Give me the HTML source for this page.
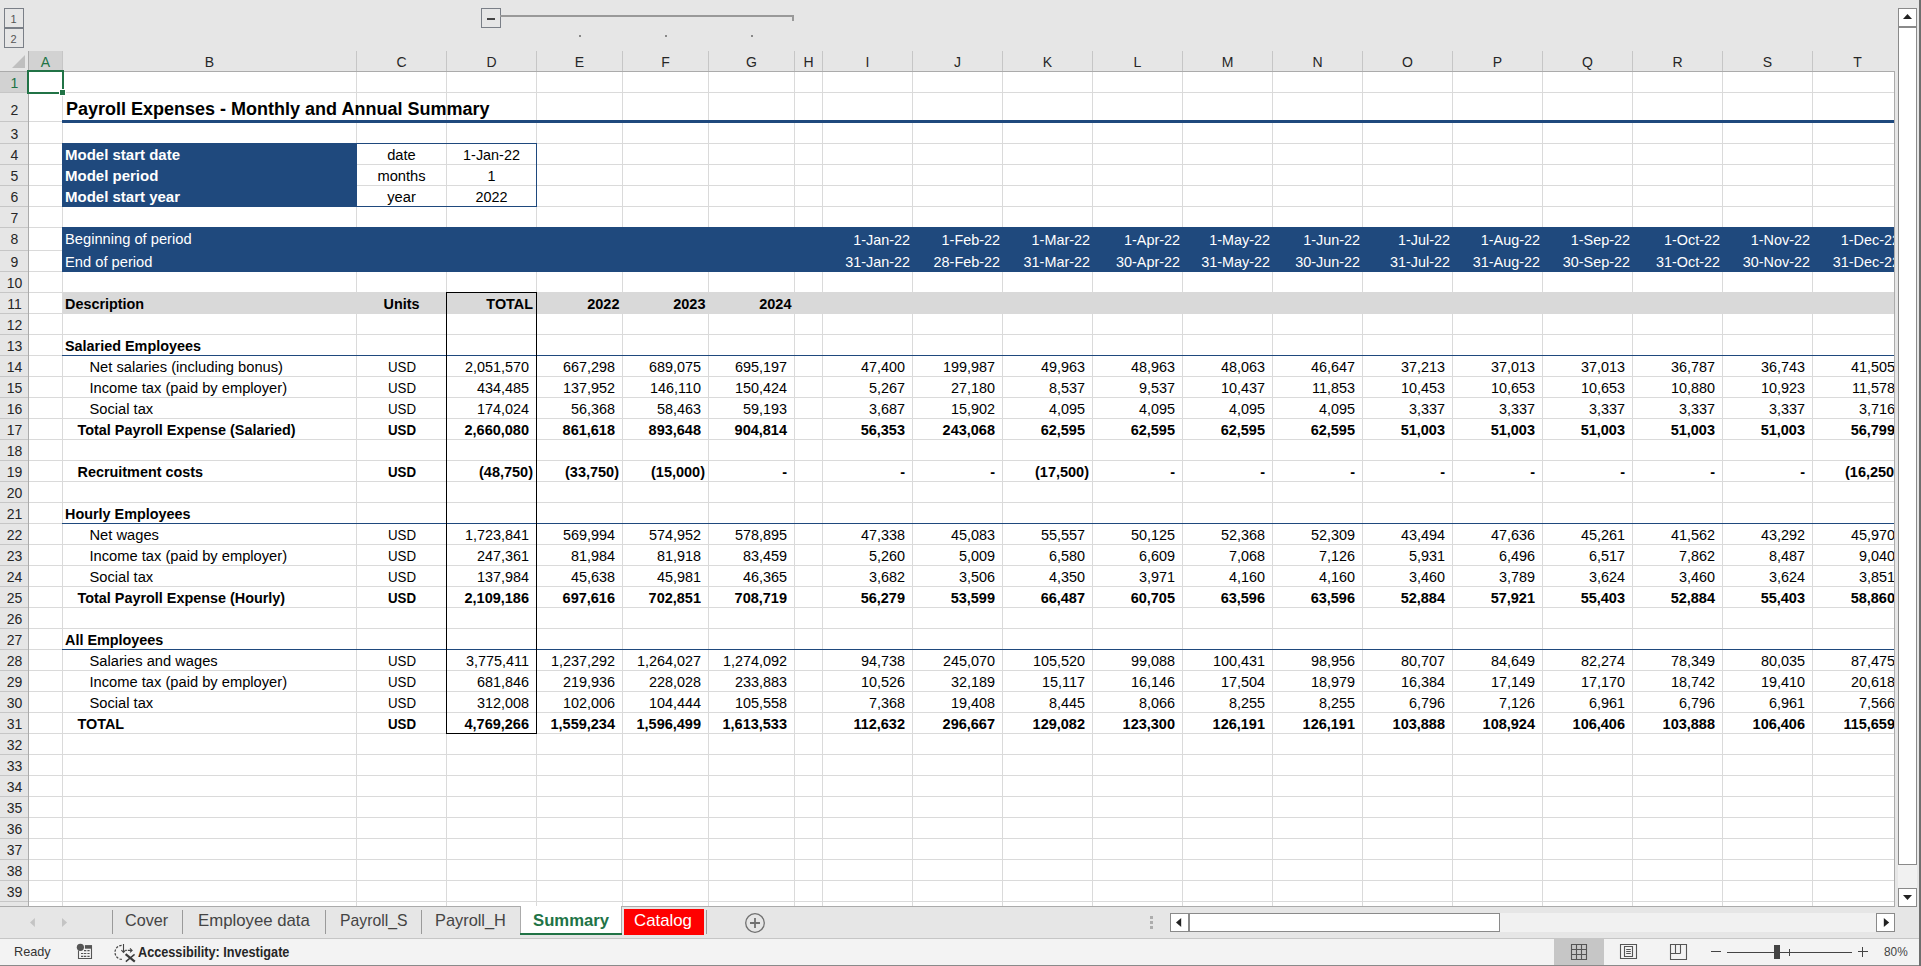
<!DOCTYPE html><html><head><meta charset="utf-8"><style>
html,body{margin:0;padding:0;width:1921px;height:966px;overflow:hidden;background:#E6E6E6;font-family:"Liberation Sans", sans-serif;}
div,span,svg{position:absolute;}
.t{white-space:nowrap;}
</style></head><body>
<div style="left:29px;top:72px;width:1865px;height:834px;background:#FFFFFF;"></div>
<div style="left:0;top:0;width:1921px;height:966px;clip-path:inset(0px 27px 60px 0px);">
<div style="left:62px;top:72px;width:1px;height:834px;background:#DADADA;"></div>
<div style="left:356px;top:72px;width:1px;height:834px;background:#DADADA;"></div>
<div style="left:446px;top:72px;width:1px;height:834px;background:#DADADA;"></div>
<div style="left:536px;top:72px;width:1px;height:834px;background:#DADADA;"></div>
<div style="left:622px;top:72px;width:1px;height:834px;background:#DADADA;"></div>
<div style="left:708px;top:72px;width:1px;height:834px;background:#DADADA;"></div>
<div style="left:794px;top:72px;width:1px;height:834px;background:#DADADA;"></div>
<div style="left:822px;top:72px;width:1px;height:834px;background:#DADADA;"></div>
<div style="left:912px;top:72px;width:1px;height:834px;background:#DADADA;"></div>
<div style="left:1002px;top:72px;width:1px;height:834px;background:#DADADA;"></div>
<div style="left:1092px;top:72px;width:1px;height:834px;background:#DADADA;"></div>
<div style="left:1182px;top:72px;width:1px;height:834px;background:#DADADA;"></div>
<div style="left:1272px;top:72px;width:1px;height:834px;background:#DADADA;"></div>
<div style="left:1362px;top:72px;width:1px;height:834px;background:#DADADA;"></div>
<div style="left:1452px;top:72px;width:1px;height:834px;background:#DADADA;"></div>
<div style="left:1542px;top:72px;width:1px;height:834px;background:#DADADA;"></div>
<div style="left:1632px;top:72px;width:1px;height:834px;background:#DADADA;"></div>
<div style="left:1722px;top:72px;width:1px;height:834px;background:#DADADA;"></div>
<div style="left:1812px;top:72px;width:1px;height:834px;background:#DADADA;"></div>
<div style="left:1902px;top:72px;width:1px;height:834px;background:#DADADA;"></div>
<div style="left:29px;top:92px;width:1865px;height:1px;background:#DADADA;"></div>
<div style="left:29px;top:121px;width:1865px;height:1px;background:#DADADA;"></div>
<div style="left:29px;top:143px;width:1865px;height:1px;background:#DADADA;"></div>
<div style="left:29px;top:164px;width:1865px;height:1px;background:#DADADA;"></div>
<div style="left:29px;top:185px;width:1865px;height:1px;background:#DADADA;"></div>
<div style="left:29px;top:206px;width:1865px;height:1px;background:#DADADA;"></div>
<div style="left:29px;top:227px;width:1865px;height:1px;background:#DADADA;"></div>
<div style="left:29px;top:250px;width:1865px;height:1px;background:#DADADA;"></div>
<div style="left:29px;top:271px;width:1865px;height:1px;background:#DADADA;"></div>
<div style="left:29px;top:292px;width:1865px;height:1px;background:#DADADA;"></div>
<div style="left:29px;top:313px;width:1865px;height:1px;background:#DADADA;"></div>
<div style="left:29px;top:334px;width:1865px;height:1px;background:#DADADA;"></div>
<div style="left:29px;top:355px;width:1865px;height:1px;background:#DADADA;"></div>
<div style="left:29px;top:376px;width:1865px;height:1px;background:#DADADA;"></div>
<div style="left:29px;top:397px;width:1865px;height:1px;background:#DADADA;"></div>
<div style="left:29px;top:418px;width:1865px;height:1px;background:#DADADA;"></div>
<div style="left:29px;top:439px;width:1865px;height:1px;background:#DADADA;"></div>
<div style="left:29px;top:460px;width:1865px;height:1px;background:#DADADA;"></div>
<div style="left:29px;top:481px;width:1865px;height:1px;background:#DADADA;"></div>
<div style="left:29px;top:502px;width:1865px;height:1px;background:#DADADA;"></div>
<div style="left:29px;top:523px;width:1865px;height:1px;background:#DADADA;"></div>
<div style="left:29px;top:544px;width:1865px;height:1px;background:#DADADA;"></div>
<div style="left:29px;top:565px;width:1865px;height:1px;background:#DADADA;"></div>
<div style="left:29px;top:586px;width:1865px;height:1px;background:#DADADA;"></div>
<div style="left:29px;top:607px;width:1865px;height:1px;background:#DADADA;"></div>
<div style="left:29px;top:628px;width:1865px;height:1px;background:#DADADA;"></div>
<div style="left:29px;top:649px;width:1865px;height:1px;background:#DADADA;"></div>
<div style="left:29px;top:670px;width:1865px;height:1px;background:#DADADA;"></div>
<div style="left:29px;top:691px;width:1865px;height:1px;background:#DADADA;"></div>
<div style="left:29px;top:712px;width:1865px;height:1px;background:#DADADA;"></div>
<div style="left:29px;top:733px;width:1865px;height:1px;background:#DADADA;"></div>
<div style="left:29px;top:754px;width:1865px;height:1px;background:#DADADA;"></div>
<div style="left:29px;top:775px;width:1865px;height:1px;background:#DADADA;"></div>
<div style="left:29px;top:796px;width:1865px;height:1px;background:#DADADA;"></div>
<div style="left:29px;top:817px;width:1865px;height:1px;background:#DADADA;"></div>
<div style="left:29px;top:838px;width:1865px;height:1px;background:#DADADA;"></div>
<div style="left:29px;top:859px;width:1865px;height:1px;background:#DADADA;"></div>
<div style="left:29px;top:880px;width:1865px;height:1px;background:#DADADA;"></div>
<div style="left:29px;top:901px;width:1865px;height:1px;background:#DADADA;"></div>
<div style="left:62px;top:143px;width:295px;height:64px;background:#1F497D;"></div>
<div style="left:62px;top:227px;width:1832px;height:45px;background:#1F497D;"></div>
<div style="left:62px;top:292px;width:1832px;height:22px;background:#D9D9D9;"></div>
<div style="left:62px;top:120px;width:1832px;height:3px;background:#1F497D;"></div>
<div style="left:356px;top:143px;width:179px;height:62px;border:1px solid #1F497D;"></div>
<div style="left:62px;top:355px;width:1832px;height:1px;background:#1F497D;"></div>
<div style="left:62px;top:523px;width:1832px;height:1px;background:#1F497D;"></div>
<div style="left:62px;top:649px;width:1832px;height:1px;background:#1F497D;"></div>
<div style="left:446px;top:292px;width:89px;height:440px;border:1px solid #000;"></div>
<span class="t" style="top:98.76px;font-size:18px;line-height:20px;font-weight:700;color:#000;left:66px;">Payroll Expenses - Monthly and Annual Summary</span>
<span class="t" style="top:144.80px;font-size:15.0px;line-height:20px;font-weight:700;color:#FFFFFF;left:65px;">Model start date</span>
<span class="t" style="top:144.90px;font-size:14.7px;line-height:20px;font-weight:400;color:#000;left:201.5px;width:400px;text-align:center;">date</span>
<span class="t" style="top:145.01px;font-size:14.4px;line-height:20px;font-weight:400;color:#000;left:291.5px;width:400px;text-align:center;">1-Jan-22</span>
<span class="t" style="top:165.80px;font-size:15.0px;line-height:20px;font-weight:700;color:#FFFFFF;left:65px;">Model period</span>
<span class="t" style="top:165.90px;font-size:14.7px;line-height:20px;font-weight:400;color:#000;left:201.5px;width:400px;text-align:center;">months</span>
<span class="t" style="top:166.01px;font-size:14.4px;line-height:20px;font-weight:400;color:#000;left:291.5px;width:400px;text-align:center;">1</span>
<span class="t" style="top:186.80px;font-size:15.0px;line-height:20px;font-weight:700;color:#FFFFFF;left:65px;">Model start year</span>
<span class="t" style="top:186.90px;font-size:14.7px;line-height:20px;font-weight:400;color:#000;left:201.5px;width:400px;text-align:center;">year</span>
<span class="t" style="top:187.01px;font-size:14.4px;line-height:20px;font-weight:400;color:#000;left:291.5px;width:400px;text-align:center;">2022</span>
<span class="t" style="top:229.40px;font-size:14.7px;line-height:20px;font-weight:400;color:#FFFFFF;left:65px;">Beginning of period</span>
<span class="t" style="top:251.90px;font-size:14.7px;line-height:20px;font-weight:400;color:#FFFFFF;left:65px;">End of period</span>
<span class="t" style="top:229.51px;font-size:14.4px;line-height:20px;font-weight:400;color:#FFFFFF;right:1011px;">1-Jan-22</span>
<span class="t" style="top:252.01px;font-size:14.4px;line-height:20px;font-weight:400;color:#FFFFFF;right:1011px;">31-Jan-22</span>
<span class="t" style="top:229.51px;font-size:14.4px;line-height:20px;font-weight:400;color:#FFFFFF;right:921px;">1-Feb-22</span>
<span class="t" style="top:252.01px;font-size:14.4px;line-height:20px;font-weight:400;color:#FFFFFF;right:921px;">28-Feb-22</span>
<span class="t" style="top:229.51px;font-size:14.4px;line-height:20px;font-weight:400;color:#FFFFFF;right:831px;">1-Mar-22</span>
<span class="t" style="top:252.01px;font-size:14.4px;line-height:20px;font-weight:400;color:#FFFFFF;right:831px;">31-Mar-22</span>
<span class="t" style="top:229.51px;font-size:14.4px;line-height:20px;font-weight:400;color:#FFFFFF;right:741px;">1-Apr-22</span>
<span class="t" style="top:252.01px;font-size:14.4px;line-height:20px;font-weight:400;color:#FFFFFF;right:741px;">30-Apr-22</span>
<span class="t" style="top:229.51px;font-size:14.4px;line-height:20px;font-weight:400;color:#FFFFFF;right:651px;">1-May-22</span>
<span class="t" style="top:252.01px;font-size:14.4px;line-height:20px;font-weight:400;color:#FFFFFF;right:651px;">31-May-22</span>
<span class="t" style="top:229.51px;font-size:14.4px;line-height:20px;font-weight:400;color:#FFFFFF;right:561px;">1-Jun-22</span>
<span class="t" style="top:252.01px;font-size:14.4px;line-height:20px;font-weight:400;color:#FFFFFF;right:561px;">30-Jun-22</span>
<span class="t" style="top:229.51px;font-size:14.4px;line-height:20px;font-weight:400;color:#FFFFFF;right:471px;">1-Jul-22</span>
<span class="t" style="top:252.01px;font-size:14.4px;line-height:20px;font-weight:400;color:#FFFFFF;right:471px;">31-Jul-22</span>
<span class="t" style="top:229.51px;font-size:14.4px;line-height:20px;font-weight:400;color:#FFFFFF;right:381px;">1-Aug-22</span>
<span class="t" style="top:252.01px;font-size:14.4px;line-height:20px;font-weight:400;color:#FFFFFF;right:381px;">31-Aug-22</span>
<span class="t" style="top:229.51px;font-size:14.4px;line-height:20px;font-weight:400;color:#FFFFFF;right:291px;">1-Sep-22</span>
<span class="t" style="top:252.01px;font-size:14.4px;line-height:20px;font-weight:400;color:#FFFFFF;right:291px;">30-Sep-22</span>
<span class="t" style="top:229.51px;font-size:14.4px;line-height:20px;font-weight:400;color:#FFFFFF;right:201px;">1-Oct-22</span>
<span class="t" style="top:252.01px;font-size:14.4px;line-height:20px;font-weight:400;color:#FFFFFF;right:201px;">31-Oct-22</span>
<span class="t" style="top:229.51px;font-size:14.4px;line-height:20px;font-weight:400;color:#FFFFFF;right:111px;">1-Nov-22</span>
<span class="t" style="top:252.01px;font-size:14.4px;line-height:20px;font-weight:400;color:#FFFFFF;right:111px;">30-Nov-22</span>
<span class="t" style="top:229.51px;font-size:14.4px;line-height:20px;font-weight:400;color:#FFFFFF;right:21px;">1-Dec-22</span>
<span class="t" style="top:252.01px;font-size:14.4px;line-height:20px;font-weight:400;color:#FFFFFF;right:21px;">31-Dec-22</span>
<span class="t" style="top:294.01px;font-size:14.4px;line-height:20px;font-weight:700;color:#000;left:65px;">Description</span>
<span class="t" style="top:294.01px;font-size:14.4px;line-height:20px;font-weight:700;color:#000;left:201.5px;width:400px;text-align:center;">Units</span>
<span class="t" style="top:294.01px;font-size:14.4px;line-height:20px;font-weight:700;color:#000;right:1388px;">TOTAL</span>
<span class="t" style="top:293.97px;font-size:14.5px;line-height:20px;font-weight:700;color:#000;right:1301.5px;">2022</span>
<span class="t" style="top:293.97px;font-size:14.5px;line-height:20px;font-weight:700;color:#000;right:1215.5px;">2023</span>
<span class="t" style="top:293.97px;font-size:14.5px;line-height:20px;font-weight:700;color:#000;right:1129.5px;">2024</span>
<span class="t" style="top:336.01px;font-size:14.4px;line-height:20px;font-weight:700;color:#000;left:65px;">Salaried Employees</span>
<span class="t" style="top:504.01px;font-size:14.4px;line-height:20px;font-weight:700;color:#000;left:65px;">Hourly Employees</span>
<span class="t" style="top:630.01px;font-size:14.4px;line-height:20px;font-weight:700;color:#000;left:65px;">All Employees</span>
<span class="t" style="top:356.90px;font-size:14.7px;line-height:20px;font-weight:400;color:#000;left:89.5px;">Net salaries (including bonus)</span>
<span class="t" style="top:357.15px;font-size:14px;line-height:20px;font-weight:400;color:#000;left:201.5px;width:400px;text-align:center;transform:scaleX(0.95);transform-origin:center center;">USD</span>
<span class="t" style="top:357.01px;font-size:14.4px;line-height:20px;font-weight:400;color:#000;right:1392px;">2,051,570</span>
<span class="t" style="top:357.01px;font-size:14.4px;line-height:20px;font-weight:400;color:#000;right:1306px;">667,298</span>
<span class="t" style="top:357.01px;font-size:14.4px;line-height:20px;font-weight:400;color:#000;right:1220px;">689,075</span>
<span class="t" style="top:357.01px;font-size:14.4px;line-height:20px;font-weight:400;color:#000;right:1134px;">695,197</span>
<span class="t" style="top:357.01px;font-size:14.4px;line-height:20px;font-weight:400;color:#000;right:1016px;">47,400</span>
<span class="t" style="top:357.01px;font-size:14.4px;line-height:20px;font-weight:400;color:#000;right:926px;">199,987</span>
<span class="t" style="top:357.01px;font-size:14.4px;line-height:20px;font-weight:400;color:#000;right:836px;">49,963</span>
<span class="t" style="top:357.01px;font-size:14.4px;line-height:20px;font-weight:400;color:#000;right:746px;">48,963</span>
<span class="t" style="top:357.01px;font-size:14.4px;line-height:20px;font-weight:400;color:#000;right:656px;">48,063</span>
<span class="t" style="top:357.01px;font-size:14.4px;line-height:20px;font-weight:400;color:#000;right:566px;">46,647</span>
<span class="t" style="top:357.01px;font-size:14.4px;line-height:20px;font-weight:400;color:#000;right:476px;">37,213</span>
<span class="t" style="top:357.01px;font-size:14.4px;line-height:20px;font-weight:400;color:#000;right:386px;">37,013</span>
<span class="t" style="top:357.01px;font-size:14.4px;line-height:20px;font-weight:400;color:#000;right:296px;">37,013</span>
<span class="t" style="top:357.01px;font-size:14.4px;line-height:20px;font-weight:400;color:#000;right:206px;">36,787</span>
<span class="t" style="top:357.01px;font-size:14.4px;line-height:20px;font-weight:400;color:#000;right:116px;">36,743</span>
<span class="t" style="top:357.01px;font-size:14.4px;line-height:20px;font-weight:400;color:#000;right:26px;">41,505</span>
<span class="t" style="top:377.90px;font-size:14.7px;line-height:20px;font-weight:400;color:#000;left:89.5px;">Income tax (paid by employer)</span>
<span class="t" style="top:378.15px;font-size:14px;line-height:20px;font-weight:400;color:#000;left:201.5px;width:400px;text-align:center;transform:scaleX(0.95);transform-origin:center center;">USD</span>
<span class="t" style="top:378.01px;font-size:14.4px;line-height:20px;font-weight:400;color:#000;right:1392px;">434,485</span>
<span class="t" style="top:378.01px;font-size:14.4px;line-height:20px;font-weight:400;color:#000;right:1306px;">137,952</span>
<span class="t" style="top:378.01px;font-size:14.4px;line-height:20px;font-weight:400;color:#000;right:1220px;">146,110</span>
<span class="t" style="top:378.01px;font-size:14.4px;line-height:20px;font-weight:400;color:#000;right:1134px;">150,424</span>
<span class="t" style="top:378.01px;font-size:14.4px;line-height:20px;font-weight:400;color:#000;right:1016px;">5,267</span>
<span class="t" style="top:378.01px;font-size:14.4px;line-height:20px;font-weight:400;color:#000;right:926px;">27,180</span>
<span class="t" style="top:378.01px;font-size:14.4px;line-height:20px;font-weight:400;color:#000;right:836px;">8,537</span>
<span class="t" style="top:378.01px;font-size:14.4px;line-height:20px;font-weight:400;color:#000;right:746px;">9,537</span>
<span class="t" style="top:378.01px;font-size:14.4px;line-height:20px;font-weight:400;color:#000;right:656px;">10,437</span>
<span class="t" style="top:378.01px;font-size:14.4px;line-height:20px;font-weight:400;color:#000;right:566px;">11,853</span>
<span class="t" style="top:378.01px;font-size:14.4px;line-height:20px;font-weight:400;color:#000;right:476px;">10,453</span>
<span class="t" style="top:378.01px;font-size:14.4px;line-height:20px;font-weight:400;color:#000;right:386px;">10,653</span>
<span class="t" style="top:378.01px;font-size:14.4px;line-height:20px;font-weight:400;color:#000;right:296px;">10,653</span>
<span class="t" style="top:378.01px;font-size:14.4px;line-height:20px;font-weight:400;color:#000;right:206px;">10,880</span>
<span class="t" style="top:378.01px;font-size:14.4px;line-height:20px;font-weight:400;color:#000;right:116px;">10,923</span>
<span class="t" style="top:378.01px;font-size:14.4px;line-height:20px;font-weight:400;color:#000;right:26px;">11,578</span>
<span class="t" style="top:398.90px;font-size:14.7px;line-height:20px;font-weight:400;color:#000;left:89.5px;">Social tax</span>
<span class="t" style="top:399.15px;font-size:14px;line-height:20px;font-weight:400;color:#000;left:201.5px;width:400px;text-align:center;transform:scaleX(0.95);transform-origin:center center;">USD</span>
<span class="t" style="top:399.01px;font-size:14.4px;line-height:20px;font-weight:400;color:#000;right:1392px;">174,024</span>
<span class="t" style="top:399.01px;font-size:14.4px;line-height:20px;font-weight:400;color:#000;right:1306px;">56,368</span>
<span class="t" style="top:399.01px;font-size:14.4px;line-height:20px;font-weight:400;color:#000;right:1220px;">58,463</span>
<span class="t" style="top:399.01px;font-size:14.4px;line-height:20px;font-weight:400;color:#000;right:1134px;">59,193</span>
<span class="t" style="top:399.01px;font-size:14.4px;line-height:20px;font-weight:400;color:#000;right:1016px;">3,687</span>
<span class="t" style="top:399.01px;font-size:14.4px;line-height:20px;font-weight:400;color:#000;right:926px;">15,902</span>
<span class="t" style="top:399.01px;font-size:14.4px;line-height:20px;font-weight:400;color:#000;right:836px;">4,095</span>
<span class="t" style="top:399.01px;font-size:14.4px;line-height:20px;font-weight:400;color:#000;right:746px;">4,095</span>
<span class="t" style="top:399.01px;font-size:14.4px;line-height:20px;font-weight:400;color:#000;right:656px;">4,095</span>
<span class="t" style="top:399.01px;font-size:14.4px;line-height:20px;font-weight:400;color:#000;right:566px;">4,095</span>
<span class="t" style="top:399.01px;font-size:14.4px;line-height:20px;font-weight:400;color:#000;right:476px;">3,337</span>
<span class="t" style="top:399.01px;font-size:14.4px;line-height:20px;font-weight:400;color:#000;right:386px;">3,337</span>
<span class="t" style="top:399.01px;font-size:14.4px;line-height:20px;font-weight:400;color:#000;right:296px;">3,337</span>
<span class="t" style="top:399.01px;font-size:14.4px;line-height:20px;font-weight:400;color:#000;right:206px;">3,337</span>
<span class="t" style="top:399.01px;font-size:14.4px;line-height:20px;font-weight:400;color:#000;right:116px;">3,337</span>
<span class="t" style="top:399.01px;font-size:14.4px;line-height:20px;font-weight:400;color:#000;right:26px;">3,716</span>
<span class="t" style="top:420.01px;font-size:14.4px;line-height:20px;font-weight:700;color:#000;left:77.5px;">Total Payroll Expense (Salaried)</span>
<span class="t" style="top:420.15px;font-size:14px;line-height:20px;font-weight:700;color:#000;left:201.5px;width:400px;text-align:center;transform:scaleX(0.95);transform-origin:center center;">USD</span>
<span class="t" style="top:419.97px;font-size:14.5px;line-height:20px;font-weight:700;color:#000;right:1392px;">2,660,080</span>
<span class="t" style="top:419.97px;font-size:14.5px;line-height:20px;font-weight:700;color:#000;right:1306px;">861,618</span>
<span class="t" style="top:419.97px;font-size:14.5px;line-height:20px;font-weight:700;color:#000;right:1220px;">893,648</span>
<span class="t" style="top:419.97px;font-size:14.5px;line-height:20px;font-weight:700;color:#000;right:1134px;">904,814</span>
<span class="t" style="top:419.97px;font-size:14.5px;line-height:20px;font-weight:700;color:#000;right:1016px;">56,353</span>
<span class="t" style="top:419.97px;font-size:14.5px;line-height:20px;font-weight:700;color:#000;right:926px;">243,068</span>
<span class="t" style="top:419.97px;font-size:14.5px;line-height:20px;font-weight:700;color:#000;right:836px;">62,595</span>
<span class="t" style="top:419.97px;font-size:14.5px;line-height:20px;font-weight:700;color:#000;right:746px;">62,595</span>
<span class="t" style="top:419.97px;font-size:14.5px;line-height:20px;font-weight:700;color:#000;right:656px;">62,595</span>
<span class="t" style="top:419.97px;font-size:14.5px;line-height:20px;font-weight:700;color:#000;right:566px;">62,595</span>
<span class="t" style="top:419.97px;font-size:14.5px;line-height:20px;font-weight:700;color:#000;right:476px;">51,003</span>
<span class="t" style="top:419.97px;font-size:14.5px;line-height:20px;font-weight:700;color:#000;right:386px;">51,003</span>
<span class="t" style="top:419.97px;font-size:14.5px;line-height:20px;font-weight:700;color:#000;right:296px;">51,003</span>
<span class="t" style="top:419.97px;font-size:14.5px;line-height:20px;font-weight:700;color:#000;right:206px;">51,003</span>
<span class="t" style="top:419.97px;font-size:14.5px;line-height:20px;font-weight:700;color:#000;right:116px;">51,003</span>
<span class="t" style="top:419.97px;font-size:14.5px;line-height:20px;font-weight:700;color:#000;right:26px;">56,799</span>
<span class="t" style="top:462.01px;font-size:14.4px;line-height:20px;font-weight:700;color:#000;left:77.5px;">Recruitment costs</span>
<span class="t" style="top:462.15px;font-size:14px;line-height:20px;font-weight:700;color:#000;left:201.5px;width:400px;text-align:center;transform:scaleX(0.95);transform-origin:center center;">USD</span>
<span class="t" style="top:461.97px;font-size:14.5px;line-height:20px;font-weight:700;color:#000;right:1388px;">(48,750)</span>
<span class="t" style="top:461.97px;font-size:14.5px;line-height:20px;font-weight:700;color:#000;right:1302px;">(33,750)</span>
<span class="t" style="top:461.97px;font-size:14.5px;line-height:20px;font-weight:700;color:#000;right:1216px;">(15,000)</span>
<span class="t" style="top:461.97px;font-size:14.5px;line-height:20px;font-weight:700;color:#000;right:1134px;">-</span>
<span class="t" style="top:461.97px;font-size:14.5px;line-height:20px;font-weight:700;color:#000;right:1016px;">-</span>
<span class="t" style="top:461.97px;font-size:14.5px;line-height:20px;font-weight:700;color:#000;right:926px;">-</span>
<span class="t" style="top:461.97px;font-size:14.5px;line-height:20px;font-weight:700;color:#000;right:832px;">(17,500)</span>
<span class="t" style="top:461.97px;font-size:14.5px;line-height:20px;font-weight:700;color:#000;right:746px;">-</span>
<span class="t" style="top:461.97px;font-size:14.5px;line-height:20px;font-weight:700;color:#000;right:656px;">-</span>
<span class="t" style="top:461.97px;font-size:14.5px;line-height:20px;font-weight:700;color:#000;right:566px;">-</span>
<span class="t" style="top:461.97px;font-size:14.5px;line-height:20px;font-weight:700;color:#000;right:476px;">-</span>
<span class="t" style="top:461.97px;font-size:14.5px;line-height:20px;font-weight:700;color:#000;right:386px;">-</span>
<span class="t" style="top:461.97px;font-size:14.5px;line-height:20px;font-weight:700;color:#000;right:296px;">-</span>
<span class="t" style="top:461.97px;font-size:14.5px;line-height:20px;font-weight:700;color:#000;right:206px;">-</span>
<span class="t" style="top:461.97px;font-size:14.5px;line-height:20px;font-weight:700;color:#000;right:116px;">-</span>
<span class="t" style="top:461.97px;font-size:14.5px;line-height:20px;font-weight:700;color:#000;right:22px;">(16,250)</span>
<span class="t" style="top:524.90px;font-size:14.7px;line-height:20px;font-weight:400;color:#000;left:89.5px;">Net wages</span>
<span class="t" style="top:525.15px;font-size:14px;line-height:20px;font-weight:400;color:#000;left:201.5px;width:400px;text-align:center;transform:scaleX(0.95);transform-origin:center center;">USD</span>
<span class="t" style="top:525.01px;font-size:14.4px;line-height:20px;font-weight:400;color:#000;right:1392px;">1,723,841</span>
<span class="t" style="top:525.01px;font-size:14.4px;line-height:20px;font-weight:400;color:#000;right:1306px;">569,994</span>
<span class="t" style="top:525.01px;font-size:14.4px;line-height:20px;font-weight:400;color:#000;right:1220px;">574,952</span>
<span class="t" style="top:525.01px;font-size:14.4px;line-height:20px;font-weight:400;color:#000;right:1134px;">578,895</span>
<span class="t" style="top:525.01px;font-size:14.4px;line-height:20px;font-weight:400;color:#000;right:1016px;">47,338</span>
<span class="t" style="top:525.01px;font-size:14.4px;line-height:20px;font-weight:400;color:#000;right:926px;">45,083</span>
<span class="t" style="top:525.01px;font-size:14.4px;line-height:20px;font-weight:400;color:#000;right:836px;">55,557</span>
<span class="t" style="top:525.01px;font-size:14.4px;line-height:20px;font-weight:400;color:#000;right:746px;">50,125</span>
<span class="t" style="top:525.01px;font-size:14.4px;line-height:20px;font-weight:400;color:#000;right:656px;">52,368</span>
<span class="t" style="top:525.01px;font-size:14.4px;line-height:20px;font-weight:400;color:#000;right:566px;">52,309</span>
<span class="t" style="top:525.01px;font-size:14.4px;line-height:20px;font-weight:400;color:#000;right:476px;">43,494</span>
<span class="t" style="top:525.01px;font-size:14.4px;line-height:20px;font-weight:400;color:#000;right:386px;">47,636</span>
<span class="t" style="top:525.01px;font-size:14.4px;line-height:20px;font-weight:400;color:#000;right:296px;">45,261</span>
<span class="t" style="top:525.01px;font-size:14.4px;line-height:20px;font-weight:400;color:#000;right:206px;">41,562</span>
<span class="t" style="top:525.01px;font-size:14.4px;line-height:20px;font-weight:400;color:#000;right:116px;">43,292</span>
<span class="t" style="top:525.01px;font-size:14.4px;line-height:20px;font-weight:400;color:#000;right:26px;">45,970</span>
<span class="t" style="top:545.90px;font-size:14.7px;line-height:20px;font-weight:400;color:#000;left:89.5px;">Income tax (paid by employer)</span>
<span class="t" style="top:546.15px;font-size:14px;line-height:20px;font-weight:400;color:#000;left:201.5px;width:400px;text-align:center;transform:scaleX(0.95);transform-origin:center center;">USD</span>
<span class="t" style="top:546.01px;font-size:14.4px;line-height:20px;font-weight:400;color:#000;right:1392px;">247,361</span>
<span class="t" style="top:546.01px;font-size:14.4px;line-height:20px;font-weight:400;color:#000;right:1306px;">81,984</span>
<span class="t" style="top:546.01px;font-size:14.4px;line-height:20px;font-weight:400;color:#000;right:1220px;">81,918</span>
<span class="t" style="top:546.01px;font-size:14.4px;line-height:20px;font-weight:400;color:#000;right:1134px;">83,459</span>
<span class="t" style="top:546.01px;font-size:14.4px;line-height:20px;font-weight:400;color:#000;right:1016px;">5,260</span>
<span class="t" style="top:546.01px;font-size:14.4px;line-height:20px;font-weight:400;color:#000;right:926px;">5,009</span>
<span class="t" style="top:546.01px;font-size:14.4px;line-height:20px;font-weight:400;color:#000;right:836px;">6,580</span>
<span class="t" style="top:546.01px;font-size:14.4px;line-height:20px;font-weight:400;color:#000;right:746px;">6,609</span>
<span class="t" style="top:546.01px;font-size:14.4px;line-height:20px;font-weight:400;color:#000;right:656px;">7,068</span>
<span class="t" style="top:546.01px;font-size:14.4px;line-height:20px;font-weight:400;color:#000;right:566px;">7,126</span>
<span class="t" style="top:546.01px;font-size:14.4px;line-height:20px;font-weight:400;color:#000;right:476px;">5,931</span>
<span class="t" style="top:546.01px;font-size:14.4px;line-height:20px;font-weight:400;color:#000;right:386px;">6,496</span>
<span class="t" style="top:546.01px;font-size:14.4px;line-height:20px;font-weight:400;color:#000;right:296px;">6,517</span>
<span class="t" style="top:546.01px;font-size:14.4px;line-height:20px;font-weight:400;color:#000;right:206px;">7,862</span>
<span class="t" style="top:546.01px;font-size:14.4px;line-height:20px;font-weight:400;color:#000;right:116px;">8,487</span>
<span class="t" style="top:546.01px;font-size:14.4px;line-height:20px;font-weight:400;color:#000;right:26px;">9,040</span>
<span class="t" style="top:566.90px;font-size:14.7px;line-height:20px;font-weight:400;color:#000;left:89.5px;">Social tax</span>
<span class="t" style="top:567.15px;font-size:14px;line-height:20px;font-weight:400;color:#000;left:201.5px;width:400px;text-align:center;transform:scaleX(0.95);transform-origin:center center;">USD</span>
<span class="t" style="top:567.01px;font-size:14.4px;line-height:20px;font-weight:400;color:#000;right:1392px;">137,984</span>
<span class="t" style="top:567.01px;font-size:14.4px;line-height:20px;font-weight:400;color:#000;right:1306px;">45,638</span>
<span class="t" style="top:567.01px;font-size:14.4px;line-height:20px;font-weight:400;color:#000;right:1220px;">45,981</span>
<span class="t" style="top:567.01px;font-size:14.4px;line-height:20px;font-weight:400;color:#000;right:1134px;">46,365</span>
<span class="t" style="top:567.01px;font-size:14.4px;line-height:20px;font-weight:400;color:#000;right:1016px;">3,682</span>
<span class="t" style="top:567.01px;font-size:14.4px;line-height:20px;font-weight:400;color:#000;right:926px;">3,506</span>
<span class="t" style="top:567.01px;font-size:14.4px;line-height:20px;font-weight:400;color:#000;right:836px;">4,350</span>
<span class="t" style="top:567.01px;font-size:14.4px;line-height:20px;font-weight:400;color:#000;right:746px;">3,971</span>
<span class="t" style="top:567.01px;font-size:14.4px;line-height:20px;font-weight:400;color:#000;right:656px;">4,160</span>
<span class="t" style="top:567.01px;font-size:14.4px;line-height:20px;font-weight:400;color:#000;right:566px;">4,160</span>
<span class="t" style="top:567.01px;font-size:14.4px;line-height:20px;font-weight:400;color:#000;right:476px;">3,460</span>
<span class="t" style="top:567.01px;font-size:14.4px;line-height:20px;font-weight:400;color:#000;right:386px;">3,789</span>
<span class="t" style="top:567.01px;font-size:14.4px;line-height:20px;font-weight:400;color:#000;right:296px;">3,624</span>
<span class="t" style="top:567.01px;font-size:14.4px;line-height:20px;font-weight:400;color:#000;right:206px;">3,460</span>
<span class="t" style="top:567.01px;font-size:14.4px;line-height:20px;font-weight:400;color:#000;right:116px;">3,624</span>
<span class="t" style="top:567.01px;font-size:14.4px;line-height:20px;font-weight:400;color:#000;right:26px;">3,851</span>
<span class="t" style="top:588.01px;font-size:14.4px;line-height:20px;font-weight:700;color:#000;left:77.5px;">Total Payroll Expense (Hourly)</span>
<span class="t" style="top:588.15px;font-size:14px;line-height:20px;font-weight:700;color:#000;left:201.5px;width:400px;text-align:center;transform:scaleX(0.95);transform-origin:center center;">USD</span>
<span class="t" style="top:587.97px;font-size:14.5px;line-height:20px;font-weight:700;color:#000;right:1392px;">2,109,186</span>
<span class="t" style="top:587.97px;font-size:14.5px;line-height:20px;font-weight:700;color:#000;right:1306px;">697,616</span>
<span class="t" style="top:587.97px;font-size:14.5px;line-height:20px;font-weight:700;color:#000;right:1220px;">702,851</span>
<span class="t" style="top:587.97px;font-size:14.5px;line-height:20px;font-weight:700;color:#000;right:1134px;">708,719</span>
<span class="t" style="top:587.97px;font-size:14.5px;line-height:20px;font-weight:700;color:#000;right:1016px;">56,279</span>
<span class="t" style="top:587.97px;font-size:14.5px;line-height:20px;font-weight:700;color:#000;right:926px;">53,599</span>
<span class="t" style="top:587.97px;font-size:14.5px;line-height:20px;font-weight:700;color:#000;right:836px;">66,487</span>
<span class="t" style="top:587.97px;font-size:14.5px;line-height:20px;font-weight:700;color:#000;right:746px;">60,705</span>
<span class="t" style="top:587.97px;font-size:14.5px;line-height:20px;font-weight:700;color:#000;right:656px;">63,596</span>
<span class="t" style="top:587.97px;font-size:14.5px;line-height:20px;font-weight:700;color:#000;right:566px;">63,596</span>
<span class="t" style="top:587.97px;font-size:14.5px;line-height:20px;font-weight:700;color:#000;right:476px;">52,884</span>
<span class="t" style="top:587.97px;font-size:14.5px;line-height:20px;font-weight:700;color:#000;right:386px;">57,921</span>
<span class="t" style="top:587.97px;font-size:14.5px;line-height:20px;font-weight:700;color:#000;right:296px;">55,403</span>
<span class="t" style="top:587.97px;font-size:14.5px;line-height:20px;font-weight:700;color:#000;right:206px;">52,884</span>
<span class="t" style="top:587.97px;font-size:14.5px;line-height:20px;font-weight:700;color:#000;right:116px;">55,403</span>
<span class="t" style="top:587.97px;font-size:14.5px;line-height:20px;font-weight:700;color:#000;right:26px;">58,860</span>
<span class="t" style="top:650.90px;font-size:14.7px;line-height:20px;font-weight:400;color:#000;left:89.5px;">Salaries and wages</span>
<span class="t" style="top:651.15px;font-size:14px;line-height:20px;font-weight:400;color:#000;left:201.5px;width:400px;text-align:center;transform:scaleX(0.95);transform-origin:center center;">USD</span>
<span class="t" style="top:651.01px;font-size:14.4px;line-height:20px;font-weight:400;color:#000;right:1392px;">3,775,411</span>
<span class="t" style="top:651.01px;font-size:14.4px;line-height:20px;font-weight:400;color:#000;right:1306px;">1,237,292</span>
<span class="t" style="top:651.01px;font-size:14.4px;line-height:20px;font-weight:400;color:#000;right:1220px;">1,264,027</span>
<span class="t" style="top:651.01px;font-size:14.4px;line-height:20px;font-weight:400;color:#000;right:1134px;">1,274,092</span>
<span class="t" style="top:651.01px;font-size:14.4px;line-height:20px;font-weight:400;color:#000;right:1016px;">94,738</span>
<span class="t" style="top:651.01px;font-size:14.4px;line-height:20px;font-weight:400;color:#000;right:926px;">245,070</span>
<span class="t" style="top:651.01px;font-size:14.4px;line-height:20px;font-weight:400;color:#000;right:836px;">105,520</span>
<span class="t" style="top:651.01px;font-size:14.4px;line-height:20px;font-weight:400;color:#000;right:746px;">99,088</span>
<span class="t" style="top:651.01px;font-size:14.4px;line-height:20px;font-weight:400;color:#000;right:656px;">100,431</span>
<span class="t" style="top:651.01px;font-size:14.4px;line-height:20px;font-weight:400;color:#000;right:566px;">98,956</span>
<span class="t" style="top:651.01px;font-size:14.4px;line-height:20px;font-weight:400;color:#000;right:476px;">80,707</span>
<span class="t" style="top:651.01px;font-size:14.4px;line-height:20px;font-weight:400;color:#000;right:386px;">84,649</span>
<span class="t" style="top:651.01px;font-size:14.4px;line-height:20px;font-weight:400;color:#000;right:296px;">82,274</span>
<span class="t" style="top:651.01px;font-size:14.4px;line-height:20px;font-weight:400;color:#000;right:206px;">78,349</span>
<span class="t" style="top:651.01px;font-size:14.4px;line-height:20px;font-weight:400;color:#000;right:116px;">80,035</span>
<span class="t" style="top:651.01px;font-size:14.4px;line-height:20px;font-weight:400;color:#000;right:26px;">87,475</span>
<span class="t" style="top:671.90px;font-size:14.7px;line-height:20px;font-weight:400;color:#000;left:89.5px;">Income tax (paid by employer)</span>
<span class="t" style="top:672.15px;font-size:14px;line-height:20px;font-weight:400;color:#000;left:201.5px;width:400px;text-align:center;transform:scaleX(0.95);transform-origin:center center;">USD</span>
<span class="t" style="top:672.01px;font-size:14.4px;line-height:20px;font-weight:400;color:#000;right:1392px;">681,846</span>
<span class="t" style="top:672.01px;font-size:14.4px;line-height:20px;font-weight:400;color:#000;right:1306px;">219,936</span>
<span class="t" style="top:672.01px;font-size:14.4px;line-height:20px;font-weight:400;color:#000;right:1220px;">228,028</span>
<span class="t" style="top:672.01px;font-size:14.4px;line-height:20px;font-weight:400;color:#000;right:1134px;">233,883</span>
<span class="t" style="top:672.01px;font-size:14.4px;line-height:20px;font-weight:400;color:#000;right:1016px;">10,526</span>
<span class="t" style="top:672.01px;font-size:14.4px;line-height:20px;font-weight:400;color:#000;right:926px;">32,189</span>
<span class="t" style="top:672.01px;font-size:14.4px;line-height:20px;font-weight:400;color:#000;right:836px;">15,117</span>
<span class="t" style="top:672.01px;font-size:14.4px;line-height:20px;font-weight:400;color:#000;right:746px;">16,146</span>
<span class="t" style="top:672.01px;font-size:14.4px;line-height:20px;font-weight:400;color:#000;right:656px;">17,504</span>
<span class="t" style="top:672.01px;font-size:14.4px;line-height:20px;font-weight:400;color:#000;right:566px;">18,979</span>
<span class="t" style="top:672.01px;font-size:14.4px;line-height:20px;font-weight:400;color:#000;right:476px;">16,384</span>
<span class="t" style="top:672.01px;font-size:14.4px;line-height:20px;font-weight:400;color:#000;right:386px;">17,149</span>
<span class="t" style="top:672.01px;font-size:14.4px;line-height:20px;font-weight:400;color:#000;right:296px;">17,170</span>
<span class="t" style="top:672.01px;font-size:14.4px;line-height:20px;font-weight:400;color:#000;right:206px;">18,742</span>
<span class="t" style="top:672.01px;font-size:14.4px;line-height:20px;font-weight:400;color:#000;right:116px;">19,410</span>
<span class="t" style="top:672.01px;font-size:14.4px;line-height:20px;font-weight:400;color:#000;right:26px;">20,618</span>
<span class="t" style="top:692.90px;font-size:14.7px;line-height:20px;font-weight:400;color:#000;left:89.5px;">Social tax</span>
<span class="t" style="top:693.15px;font-size:14px;line-height:20px;font-weight:400;color:#000;left:201.5px;width:400px;text-align:center;transform:scaleX(0.95);transform-origin:center center;">USD</span>
<span class="t" style="top:693.01px;font-size:14.4px;line-height:20px;font-weight:400;color:#000;right:1392px;">312,008</span>
<span class="t" style="top:693.01px;font-size:14.4px;line-height:20px;font-weight:400;color:#000;right:1306px;">102,006</span>
<span class="t" style="top:693.01px;font-size:14.4px;line-height:20px;font-weight:400;color:#000;right:1220px;">104,444</span>
<span class="t" style="top:693.01px;font-size:14.4px;line-height:20px;font-weight:400;color:#000;right:1134px;">105,558</span>
<span class="t" style="top:693.01px;font-size:14.4px;line-height:20px;font-weight:400;color:#000;right:1016px;">7,368</span>
<span class="t" style="top:693.01px;font-size:14.4px;line-height:20px;font-weight:400;color:#000;right:926px;">19,408</span>
<span class="t" style="top:693.01px;font-size:14.4px;line-height:20px;font-weight:400;color:#000;right:836px;">8,445</span>
<span class="t" style="top:693.01px;font-size:14.4px;line-height:20px;font-weight:400;color:#000;right:746px;">8,066</span>
<span class="t" style="top:693.01px;font-size:14.4px;line-height:20px;font-weight:400;color:#000;right:656px;">8,255</span>
<span class="t" style="top:693.01px;font-size:14.4px;line-height:20px;font-weight:400;color:#000;right:566px;">8,255</span>
<span class="t" style="top:693.01px;font-size:14.4px;line-height:20px;font-weight:400;color:#000;right:476px;">6,796</span>
<span class="t" style="top:693.01px;font-size:14.4px;line-height:20px;font-weight:400;color:#000;right:386px;">7,126</span>
<span class="t" style="top:693.01px;font-size:14.4px;line-height:20px;font-weight:400;color:#000;right:296px;">6,961</span>
<span class="t" style="top:693.01px;font-size:14.4px;line-height:20px;font-weight:400;color:#000;right:206px;">6,796</span>
<span class="t" style="top:693.01px;font-size:14.4px;line-height:20px;font-weight:400;color:#000;right:116px;">6,961</span>
<span class="t" style="top:693.01px;font-size:14.4px;line-height:20px;font-weight:400;color:#000;right:26px;">7,566</span>
<span class="t" style="top:714.01px;font-size:14.4px;line-height:20px;font-weight:700;color:#000;left:77.5px;">TOTAL</span>
<span class="t" style="top:714.15px;font-size:14px;line-height:20px;font-weight:700;color:#000;left:201.5px;width:400px;text-align:center;transform:scaleX(0.95);transform-origin:center center;">USD</span>
<span class="t" style="top:713.97px;font-size:14.5px;line-height:20px;font-weight:700;color:#000;right:1392px;">4,769,266</span>
<span class="t" style="top:713.97px;font-size:14.5px;line-height:20px;font-weight:700;color:#000;right:1306px;">1,559,234</span>
<span class="t" style="top:713.97px;font-size:14.5px;line-height:20px;font-weight:700;color:#000;right:1220px;">1,596,499</span>
<span class="t" style="top:713.97px;font-size:14.5px;line-height:20px;font-weight:700;color:#000;right:1134px;">1,613,533</span>
<span class="t" style="top:713.97px;font-size:14.5px;line-height:20px;font-weight:700;color:#000;right:1016px;">112,632</span>
<span class="t" style="top:713.97px;font-size:14.5px;line-height:20px;font-weight:700;color:#000;right:926px;">296,667</span>
<span class="t" style="top:713.97px;font-size:14.5px;line-height:20px;font-weight:700;color:#000;right:836px;">129,082</span>
<span class="t" style="top:713.97px;font-size:14.5px;line-height:20px;font-weight:700;color:#000;right:746px;">123,300</span>
<span class="t" style="top:713.97px;font-size:14.5px;line-height:20px;font-weight:700;color:#000;right:656px;">126,191</span>
<span class="t" style="top:713.97px;font-size:14.5px;line-height:20px;font-weight:700;color:#000;right:566px;">126,191</span>
<span class="t" style="top:713.97px;font-size:14.5px;line-height:20px;font-weight:700;color:#000;right:476px;">103,888</span>
<span class="t" style="top:713.97px;font-size:14.5px;line-height:20px;font-weight:700;color:#000;right:386px;">108,924</span>
<span class="t" style="top:713.97px;font-size:14.5px;line-height:20px;font-weight:700;color:#000;right:296px;">106,406</span>
<span class="t" style="top:713.97px;font-size:14.5px;line-height:20px;font-weight:700;color:#000;right:206px;">103,888</span>
<span class="t" style="top:713.97px;font-size:14.5px;line-height:20px;font-weight:700;color:#000;right:116px;">106,406</span>
<span class="t" style="top:713.97px;font-size:14.5px;line-height:20px;font-weight:700;color:#000;right:26px;">115,659</span>
</div>
<div style="left:28px;top:51px;width:1866px;height:20px;background:#E6E6E6;"></div>
<div style="left:28px;top:51px;width:34px;height:20px;background:#D2D2D2;"></div>
<div style="left:62px;top:51px;width:1px;height:20px;background:#C6C6C6;"></div>
<div style="left:356px;top:51px;width:1px;height:20px;background:#C6C6C6;"></div>
<div style="left:446px;top:51px;width:1px;height:20px;background:#C6C6C6;"></div>
<div style="left:536px;top:51px;width:1px;height:20px;background:#C6C6C6;"></div>
<div style="left:622px;top:51px;width:1px;height:20px;background:#C6C6C6;"></div>
<div style="left:708px;top:51px;width:1px;height:20px;background:#C6C6C6;"></div>
<div style="left:794px;top:51px;width:1px;height:20px;background:#C6C6C6;"></div>
<div style="left:822px;top:51px;width:1px;height:20px;background:#C6C6C6;"></div>
<div style="left:912px;top:51px;width:1px;height:20px;background:#C6C6C6;"></div>
<div style="left:1002px;top:51px;width:1px;height:20px;background:#C6C6C6;"></div>
<div style="left:1092px;top:51px;width:1px;height:20px;background:#C6C6C6;"></div>
<div style="left:1182px;top:51px;width:1px;height:20px;background:#C6C6C6;"></div>
<div style="left:1272px;top:51px;width:1px;height:20px;background:#C6C6C6;"></div>
<div style="left:1362px;top:51px;width:1px;height:20px;background:#C6C6C6;"></div>
<div style="left:1452px;top:51px;width:1px;height:20px;background:#C6C6C6;"></div>
<div style="left:1542px;top:51px;width:1px;height:20px;background:#C6C6C6;"></div>
<div style="left:1632px;top:51px;width:1px;height:20px;background:#C6C6C6;"></div>
<div style="left:1722px;top:51px;width:1px;height:20px;background:#C6C6C6;"></div>
<div style="left:1812px;top:51px;width:1px;height:20px;background:#C6C6C6;"></div>
<div style="left:0px;top:71px;width:1894px;height:1px;background:#ABABAB;"></div>
<span class="t" style="top:52.15px;font-size:14px;line-height:20px;font-weight:400;color:#217346;left:-154.5px;width:400px;text-align:center;">A</span>
<span class="t" style="top:52.15px;font-size:14px;line-height:20px;font-weight:400;color:#262626;left:9.5px;width:400px;text-align:center;">B</span>
<span class="t" style="top:52.15px;font-size:14px;line-height:20px;font-weight:400;color:#262626;left:201.5px;width:400px;text-align:center;">C</span>
<span class="t" style="top:52.15px;font-size:14px;line-height:20px;font-weight:400;color:#262626;left:291.5px;width:400px;text-align:center;">D</span>
<span class="t" style="top:52.15px;font-size:14px;line-height:20px;font-weight:400;color:#262626;left:379.5px;width:400px;text-align:center;">E</span>
<span class="t" style="top:52.15px;font-size:14px;line-height:20px;font-weight:400;color:#262626;left:465.5px;width:400px;text-align:center;">F</span>
<span class="t" style="top:52.15px;font-size:14px;line-height:20px;font-weight:400;color:#262626;left:551.5px;width:400px;text-align:center;">G</span>
<span class="t" style="top:52.15px;font-size:14px;line-height:20px;font-weight:400;color:#262626;left:608.5px;width:400px;text-align:center;">H</span>
<span class="t" style="top:52.15px;font-size:14px;line-height:20px;font-weight:400;color:#262626;left:667.5px;width:400px;text-align:center;">I</span>
<span class="t" style="top:52.15px;font-size:14px;line-height:20px;font-weight:400;color:#262626;left:757.5px;width:400px;text-align:center;">J</span>
<span class="t" style="top:52.15px;font-size:14px;line-height:20px;font-weight:400;color:#262626;left:847.5px;width:400px;text-align:center;">K</span>
<span class="t" style="top:52.15px;font-size:14px;line-height:20px;font-weight:400;color:#262626;left:937.5px;width:400px;text-align:center;">L</span>
<span class="t" style="top:52.15px;font-size:14px;line-height:20px;font-weight:400;color:#262626;left:1027.5px;width:400px;text-align:center;">M</span>
<span class="t" style="top:52.15px;font-size:14px;line-height:20px;font-weight:400;color:#262626;left:1117.5px;width:400px;text-align:center;">N</span>
<span class="t" style="top:52.15px;font-size:14px;line-height:20px;font-weight:400;color:#262626;left:1207.5px;width:400px;text-align:center;">O</span>
<span class="t" style="top:52.15px;font-size:14px;line-height:20px;font-weight:400;color:#262626;left:1297.5px;width:400px;text-align:center;">P</span>
<span class="t" style="top:52.15px;font-size:14px;line-height:20px;font-weight:400;color:#262626;left:1387.5px;width:400px;text-align:center;">Q</span>
<span class="t" style="top:52.15px;font-size:14px;line-height:20px;font-weight:400;color:#262626;left:1477.5px;width:400px;text-align:center;">R</span>
<span class="t" style="top:52.15px;font-size:14px;line-height:20px;font-weight:400;color:#262626;left:1567.5px;width:400px;text-align:center;">S</span>
<span class="t" style="top:52.15px;font-size:14px;line-height:20px;font-weight:400;color:#262626;left:1657.5px;width:400px;text-align:center;">T</span>
<div style="left:0px;top:72px;width:28px;height:834px;background:#E6E6E6;"></div>
<div style="left:0px;top:72px;width:28px;height:20px;background:#D2D2D2;"></div>
<div style="left:28px;top:51px;width:1px;height:855px;background:#ABABAB;"></div>
<div style="left:0px;top:92px;width:28px;height:1px;background:#C6C6C6;"></div>
<span class="t" style="top:73.15px;font-size:14px;line-height:20px;font-weight:400;color:#217346;left:-185.5px;width:400px;text-align:center;">1</span>
<div style="left:0px;top:121px;width:28px;height:1px;background:#C6C6C6;"></div>
<span class="t" style="top:100.15px;font-size:14px;line-height:20px;font-weight:400;color:#262626;left:-185.5px;width:400px;text-align:center;">2</span>
<div style="left:0px;top:143px;width:28px;height:1px;background:#C6C6C6;"></div>
<span class="t" style="top:124.15px;font-size:14px;line-height:20px;font-weight:400;color:#262626;left:-185.5px;width:400px;text-align:center;">3</span>
<div style="left:0px;top:164px;width:28px;height:1px;background:#C6C6C6;"></div>
<span class="t" style="top:145.15px;font-size:14px;line-height:20px;font-weight:400;color:#262626;left:-185.5px;width:400px;text-align:center;">4</span>
<div style="left:0px;top:185px;width:28px;height:1px;background:#C6C6C6;"></div>
<span class="t" style="top:166.15px;font-size:14px;line-height:20px;font-weight:400;color:#262626;left:-185.5px;width:400px;text-align:center;">5</span>
<div style="left:0px;top:206px;width:28px;height:1px;background:#C6C6C6;"></div>
<span class="t" style="top:187.15px;font-size:14px;line-height:20px;font-weight:400;color:#262626;left:-185.5px;width:400px;text-align:center;">6</span>
<div style="left:0px;top:227px;width:28px;height:1px;background:#C6C6C6;"></div>
<span class="t" style="top:208.15px;font-size:14px;line-height:20px;font-weight:400;color:#262626;left:-185.5px;width:400px;text-align:center;">7</span>
<div style="left:0px;top:250px;width:28px;height:1px;background:#C6C6C6;"></div>
<span class="t" style="top:229.15px;font-size:14px;line-height:20px;font-weight:400;color:#262626;left:-185.5px;width:400px;text-align:center;">8</span>
<div style="left:0px;top:271px;width:28px;height:1px;background:#C6C6C6;"></div>
<span class="t" style="top:252.15px;font-size:14px;line-height:20px;font-weight:400;color:#262626;left:-185.5px;width:400px;text-align:center;">9</span>
<div style="left:0px;top:292px;width:28px;height:1px;background:#C6C6C6;"></div>
<span class="t" style="top:273.15px;font-size:14px;line-height:20px;font-weight:400;color:#262626;left:-185.5px;width:400px;text-align:center;">10</span>
<div style="left:0px;top:313px;width:28px;height:1px;background:#C6C6C6;"></div>
<span class="t" style="top:294.15px;font-size:14px;line-height:20px;font-weight:400;color:#262626;left:-185.5px;width:400px;text-align:center;">11</span>
<div style="left:0px;top:334px;width:28px;height:1px;background:#C6C6C6;"></div>
<span class="t" style="top:315.15px;font-size:14px;line-height:20px;font-weight:400;color:#262626;left:-185.5px;width:400px;text-align:center;">12</span>
<div style="left:0px;top:355px;width:28px;height:1px;background:#C6C6C6;"></div>
<span class="t" style="top:336.15px;font-size:14px;line-height:20px;font-weight:400;color:#262626;left:-185.5px;width:400px;text-align:center;">13</span>
<div style="left:0px;top:376px;width:28px;height:1px;background:#C6C6C6;"></div>
<span class="t" style="top:357.15px;font-size:14px;line-height:20px;font-weight:400;color:#262626;left:-185.5px;width:400px;text-align:center;">14</span>
<div style="left:0px;top:397px;width:28px;height:1px;background:#C6C6C6;"></div>
<span class="t" style="top:378.15px;font-size:14px;line-height:20px;font-weight:400;color:#262626;left:-185.5px;width:400px;text-align:center;">15</span>
<div style="left:0px;top:418px;width:28px;height:1px;background:#C6C6C6;"></div>
<span class="t" style="top:399.15px;font-size:14px;line-height:20px;font-weight:400;color:#262626;left:-185.5px;width:400px;text-align:center;">16</span>
<div style="left:0px;top:439px;width:28px;height:1px;background:#C6C6C6;"></div>
<span class="t" style="top:420.15px;font-size:14px;line-height:20px;font-weight:400;color:#262626;left:-185.5px;width:400px;text-align:center;">17</span>
<div style="left:0px;top:460px;width:28px;height:1px;background:#C6C6C6;"></div>
<span class="t" style="top:441.15px;font-size:14px;line-height:20px;font-weight:400;color:#262626;left:-185.5px;width:400px;text-align:center;">18</span>
<div style="left:0px;top:481px;width:28px;height:1px;background:#C6C6C6;"></div>
<span class="t" style="top:462.15px;font-size:14px;line-height:20px;font-weight:400;color:#262626;left:-185.5px;width:400px;text-align:center;">19</span>
<div style="left:0px;top:502px;width:28px;height:1px;background:#C6C6C6;"></div>
<span class="t" style="top:483.15px;font-size:14px;line-height:20px;font-weight:400;color:#262626;left:-185.5px;width:400px;text-align:center;">20</span>
<div style="left:0px;top:523px;width:28px;height:1px;background:#C6C6C6;"></div>
<span class="t" style="top:504.15px;font-size:14px;line-height:20px;font-weight:400;color:#262626;left:-185.5px;width:400px;text-align:center;">21</span>
<div style="left:0px;top:544px;width:28px;height:1px;background:#C6C6C6;"></div>
<span class="t" style="top:525.15px;font-size:14px;line-height:20px;font-weight:400;color:#262626;left:-185.5px;width:400px;text-align:center;">22</span>
<div style="left:0px;top:565px;width:28px;height:1px;background:#C6C6C6;"></div>
<span class="t" style="top:546.15px;font-size:14px;line-height:20px;font-weight:400;color:#262626;left:-185.5px;width:400px;text-align:center;">23</span>
<div style="left:0px;top:586px;width:28px;height:1px;background:#C6C6C6;"></div>
<span class="t" style="top:567.15px;font-size:14px;line-height:20px;font-weight:400;color:#262626;left:-185.5px;width:400px;text-align:center;">24</span>
<div style="left:0px;top:607px;width:28px;height:1px;background:#C6C6C6;"></div>
<span class="t" style="top:588.15px;font-size:14px;line-height:20px;font-weight:400;color:#262626;left:-185.5px;width:400px;text-align:center;">25</span>
<div style="left:0px;top:628px;width:28px;height:1px;background:#C6C6C6;"></div>
<span class="t" style="top:609.15px;font-size:14px;line-height:20px;font-weight:400;color:#262626;left:-185.5px;width:400px;text-align:center;">26</span>
<div style="left:0px;top:649px;width:28px;height:1px;background:#C6C6C6;"></div>
<span class="t" style="top:630.15px;font-size:14px;line-height:20px;font-weight:400;color:#262626;left:-185.5px;width:400px;text-align:center;">27</span>
<div style="left:0px;top:670px;width:28px;height:1px;background:#C6C6C6;"></div>
<span class="t" style="top:651.15px;font-size:14px;line-height:20px;font-weight:400;color:#262626;left:-185.5px;width:400px;text-align:center;">28</span>
<div style="left:0px;top:691px;width:28px;height:1px;background:#C6C6C6;"></div>
<span class="t" style="top:672.15px;font-size:14px;line-height:20px;font-weight:400;color:#262626;left:-185.5px;width:400px;text-align:center;">29</span>
<div style="left:0px;top:712px;width:28px;height:1px;background:#C6C6C6;"></div>
<span class="t" style="top:693.15px;font-size:14px;line-height:20px;font-weight:400;color:#262626;left:-185.5px;width:400px;text-align:center;">30</span>
<div style="left:0px;top:733px;width:28px;height:1px;background:#C6C6C6;"></div>
<span class="t" style="top:714.15px;font-size:14px;line-height:20px;font-weight:400;color:#262626;left:-185.5px;width:400px;text-align:center;">31</span>
<div style="left:0px;top:754px;width:28px;height:1px;background:#C6C6C6;"></div>
<span class="t" style="top:735.15px;font-size:14px;line-height:20px;font-weight:400;color:#262626;left:-185.5px;width:400px;text-align:center;">32</span>
<div style="left:0px;top:775px;width:28px;height:1px;background:#C6C6C6;"></div>
<span class="t" style="top:756.15px;font-size:14px;line-height:20px;font-weight:400;color:#262626;left:-185.5px;width:400px;text-align:center;">33</span>
<div style="left:0px;top:796px;width:28px;height:1px;background:#C6C6C6;"></div>
<span class="t" style="top:777.15px;font-size:14px;line-height:20px;font-weight:400;color:#262626;left:-185.5px;width:400px;text-align:center;">34</span>
<div style="left:0px;top:817px;width:28px;height:1px;background:#C6C6C6;"></div>
<span class="t" style="top:798.15px;font-size:14px;line-height:20px;font-weight:400;color:#262626;left:-185.5px;width:400px;text-align:center;">35</span>
<div style="left:0px;top:838px;width:28px;height:1px;background:#C6C6C6;"></div>
<span class="t" style="top:819.15px;font-size:14px;line-height:20px;font-weight:400;color:#262626;left:-185.5px;width:400px;text-align:center;">36</span>
<div style="left:0px;top:859px;width:28px;height:1px;background:#C6C6C6;"></div>
<span class="t" style="top:840.15px;font-size:14px;line-height:20px;font-weight:400;color:#262626;left:-185.5px;width:400px;text-align:center;">37</span>
<div style="left:0px;top:880px;width:28px;height:1px;background:#C6C6C6;"></div>
<span class="t" style="top:861.15px;font-size:14px;line-height:20px;font-weight:400;color:#262626;left:-185.5px;width:400px;text-align:center;">38</span>
<div style="left:0px;top:901px;width:28px;height:1px;background:#C6C6C6;"></div>
<span class="t" style="top:882.15px;font-size:14px;line-height:20px;font-weight:400;color:#262626;left:-185.5px;width:400px;text-align:center;">39</span>
<svg style="left:0;top:51px" width="28" height="20"><polygon points="25,4 25,17 12,17" fill="#BFBFBF"/></svg>
<div style="left:4px;top:8px;width:18px;height:18px;border:1px solid #7A7F87;background:#E6E6E6;"></div>
<div style="left:4px;top:28px;width:18px;height:18px;border:1px solid #7A7F87;background:#E6E6E6;"></div>
<span class="t" style="top:9.19px;font-size:11px;line-height:20px;font-weight:400;color:#555;left:-186.5px;width:400px;text-align:center;">1</span>
<span class="t" style="top:29.19px;font-size:11px;line-height:20px;font-weight:400;color:#555;left:-186.5px;width:400px;text-align:center;">2</span>
<div style="left:481px;top:8px;width:18px;height:18px;border:1px solid #7A7F87;"></div>
<div style="left:487px;top:18px;width:8px;height:2px;background:#444;"></div>
<div style="left:500px;top:15px;width:294px;height:2px;background:#999;"></div>
<div style="left:792px;top:15px;width:2px;height:6px;background:#999;"></div>
<div style="left:579px;top:35px;width:2px;height:2px;background:#888;"></div>
<div style="left:665px;top:35px;width:2px;height:2px;background:#888;"></div>
<div style="left:751px;top:35px;width:2px;height:2px;background:#888;"></div>
<div style="left:27px;top:70px;width:33px;height:20px;border:2px solid #217346;"></div>
<div style="left:60px;top:90px;width:5px;height:5px;background:#217346;outline:1px solid #fff;"></div>
<div style="left:1894px;top:71px;width:1px;height:835px;background:#ABABAB;"></div>
<div style="left:0px;top:906px;width:1921px;height:1px;background:#ABABAB;"></div>
<div style="left:0px;top:907px;width:1921px;height:31px;background:#E6E6E6;"></div>
<svg style="left:28px;top:916px" width="12" height="14"><polygon points="6.9,1.9 6.9,10.9 2,6.4" fill="#C4C4C4"/></svg>
<svg style="left:59px;top:916px" width="12" height="14"><polygon points="3,1.9 3,10.9 8.1,6.4" fill="#C4C4C4"/></svg>
<div style="left:112px;top:910px;width:1px;height:24px;background:#9A9A9A;"></div>
<div style="left:182px;top:910px;width:1px;height:24px;background:#9A9A9A;"></div>
<div style="left:325px;top:910px;width:1px;height:24px;background:#9A9A9A;"></div>
<div style="left:421px;top:910px;width:1px;height:24px;background:#9A9A9A;"></div>
<div style="left:706px;top:910px;width:1px;height:24px;background:#9A9A9A;"></div>
<span class="t" style="top:911.11px;font-size:17px;line-height:20px;font-weight:400;color:#444;left:125.4px;transform:scaleX(0.95);transform-origin:left center;">Cover</span>
<span class="t" style="top:911.11px;font-size:17px;line-height:20px;font-weight:400;color:#444;left:198px;transform:scaleX(0.986);transform-origin:left center;">Employee data</span>
<span class="t" style="top:911.11px;font-size:17px;line-height:20px;font-weight:400;color:#444;left:339.6px;transform:scaleX(0.927);transform-origin:left center;">Payroll_S</span>
<span class="t" style="top:911.11px;font-size:17px;line-height:20px;font-weight:400;color:#444;left:435.4px;transform:scaleX(0.962);transform-origin:left center;">Payroll_H</span>
<div style="left:520px;top:906px;width:102px;height:29px;background:#FFFFFF;border-left:1px solid #ABABAB;border-right:1px solid #ABABAB;box-sizing:border-box;"></div>
<div style="left:520px;top:933px;width:102px;height:2px;background:#217346;"></div>
<span class="t" style="top:911.11px;font-size:17px;line-height:20px;font-weight:700;color:#217346;left:370.5px;width:400px;text-align:center;transform:scaleX(0.98);transform-origin:center center;">Summary</span>
<div style="left:624px;top:909px;width:80px;height:26px;background:#FF0000;"></div>
<span class="t" style="top:911.11px;font-size:17px;line-height:20px;font-weight:400;color:#FFFFFF;left:463.29999999999995px;width:400px;text-align:center;transform:scaleX(0.989);transform-origin:center center;">Catalog</span>
<svg style="left:743px;top:911px" width="24" height="24"><circle cx="12" cy="12" r="9.3" fill="none" stroke="#707070" stroke-width="1.3"/><path d="M7 12H17M12 7V17" stroke="#707070" stroke-width="1.8"/></svg>
<div style="left:1150px;top:916px;width:3px;height:3px;background:#ADADAD;"></div>
<div style="left:1150px;top:921px;width:3px;height:3px;background:#ADADAD;"></div>
<div style="left:1150px;top:926px;width:3px;height:3px;background:#ADADAD;"></div>
<div style="left:1188px;top:913px;width:688px;height:19px;background:#F1F1F1;"></div>
<div style="left:1170px;top:913px;width:17px;height:17px;border:1px solid #8A8A8A;background:#fff;"></div>
<svg style="left:1171px;top:914px" width="17" height="17"><polygon points="10.2,4 10.2,13 5,8.5" fill="#222"/></svg>
<div style="left:1189px;top:913px;width:309px;height:17px;border:1px solid #8A8A8A;background:#fff;"></div>
<div style="left:1876px;top:913px;width:17px;height:17px;border:1px solid #8A8A8A;background:#fff;"></div>
<svg style="left:1877px;top:914px" width="17" height="17"><polygon points="6.8,4 6.8,13 12.2,8.5" fill="#222"/></svg>
<div style="left:1895px;top:0px;width:26px;height:907px;background:#E6E6E6;"></div>
<div style="left:1898px;top:27px;width:19px;height:861px;background:#F1F1F1;"></div>
<div style="left:1898px;top:8px;width:17px;height:17px;border:1px solid #8A8A8A;background:#fff;"></div>
<svg style="left:1899px;top:9px" width="17" height="17"><polygon points="4,10 13,10 8.5,5" fill="#222"/></svg>
<div style="left:1898px;top:27px;width:17px;height:836px;border:1px solid #8A8A8A;background:#fff;"></div>
<div style="left:1898px;top:888px;width:17px;height:17px;border:1px solid #8A8A8A;background:#fff;"></div>
<svg style="left:1899px;top:889px" width="17" height="17"><polygon points="4,6 13,6 8.5,11" fill="#222"/></svg>
<div style="left:0px;top:938px;width:1921px;height:28px;background:#F3F3F3;"></div>
<div style="left:0px;top:938px;width:1921px;height:1px;background:#C6C6C6;"></div>
<div style="left:0px;top:965px;width:1921px;height:1px;background:#8A8A8A;"></div>
<span class="t" style="top:942.32px;font-size:13.5px;line-height:20px;font-weight:400;color:#333;left:14px;transform:scaleX(0.941);transform-origin:left center;">Ready</span>
<svg style="left:70px;top:938px" width="70" height="28"><circle cx="10.4" cy="9.3" r="3.6" fill="#555"/><rect x="14.9" y="7.1" width="7" height="3.6" fill="#555"/><path d="M8.5 12.5V20.5H21.5V7.5" fill="none" stroke="#555" stroke-width="1.1"/><path d="M14 12.6h2.3M17.4 12.6h2.2M11 15.5h2.3M14 15.5h2.3M17.4 15.5h2.2M11 18.4h2.3M14 18.4h2.3M17.4 18.4h2.2" stroke="#555" stroke-width="1.1"/><path d="M51.6 7.3A7 7 0 0 0 52.5 21.4" fill="none" stroke="#444" stroke-width="1.2" stroke-dasharray="2.4,1.4"/><path d="M53.5 6V14.3M51.4 12.1L53.5 14.4L55.6 12.1" fill="none" stroke="#444" stroke-width="1.1"/><path d="M55.6 12.4H56.8M57.8 12.4H62M60 10.4L62.1 12.4L60 14.4" fill="none" stroke="#444" stroke-width="1.1"/><path d="M55.6 16.2L64.8 23.6" stroke="#3A3A3A" stroke-width="2.2"/><path d="M55.8 23.6L64.6 16.4" stroke="#3A3A3A" stroke-width="1.4"/></svg>
<span class="t" style="top:942.15px;font-size:14px;line-height:20px;font-weight:700;color:#262626;left:138.4px;transform:scaleX(0.905);transform-origin:left center;">Accessibility: Investigate</span>
<div style="left:1554px;top:939px;width:50px;height:26px;background:#C6C6C6;"></div>
<svg style="left:1550px;top:938px" width="150" height="28"><path d="M21.5 6.5h15v15h-15zM26.5 6.5v15M31.5 6.5v15M21.5 11.5h15M21.5 16.5h15" fill="none" stroke="#555" stroke-width="1.1"/><path d="M70.5 6.5h16v14h-16zM74.5 8.5h8v10h-8z" fill="none" stroke="#555" stroke-width="1.1"/><path d="M76.2 11.5h4.6M76.2 13.5h4.6M76.2 15.5h4.6" stroke="#555" stroke-width="1"/><path d="M120.5 6.5h16v15h-16zM125.5 6.5v9M130.5 6.5v9M120.5 15.5h10" fill="none" stroke="#555" stroke-width="1.1"/></svg>
<div style="left:1711px;top:951px;width:10px;height:1px;background:#444;"></div>
<div style="left:1727px;top:952px;width:125px;height:1px;background:#444;"></div>
<div style="left:1774px;top:945px;width:6px;height:14px;background:#444;"></div>
<div style="left:1789px;top:949px;width:1px;height:7px;background:#444;"></div>
<div style="left:1858px;top:951px;width:10px;height:1px;background:#444;"></div>
<div style="left:1862px;top:947px;width:1px;height:10px;background:#444;"></div>
<span class="t" style="top:942.32px;font-size:13.5px;line-height:20px;font-weight:400;color:#444;left:1884.3px;transform:scaleX(0.877);transform-origin:left center;">80%</span>
<div style="left:1919px;top:0px;width:2px;height:966px;background:#6E6E6E;"></div>
</body></html>
